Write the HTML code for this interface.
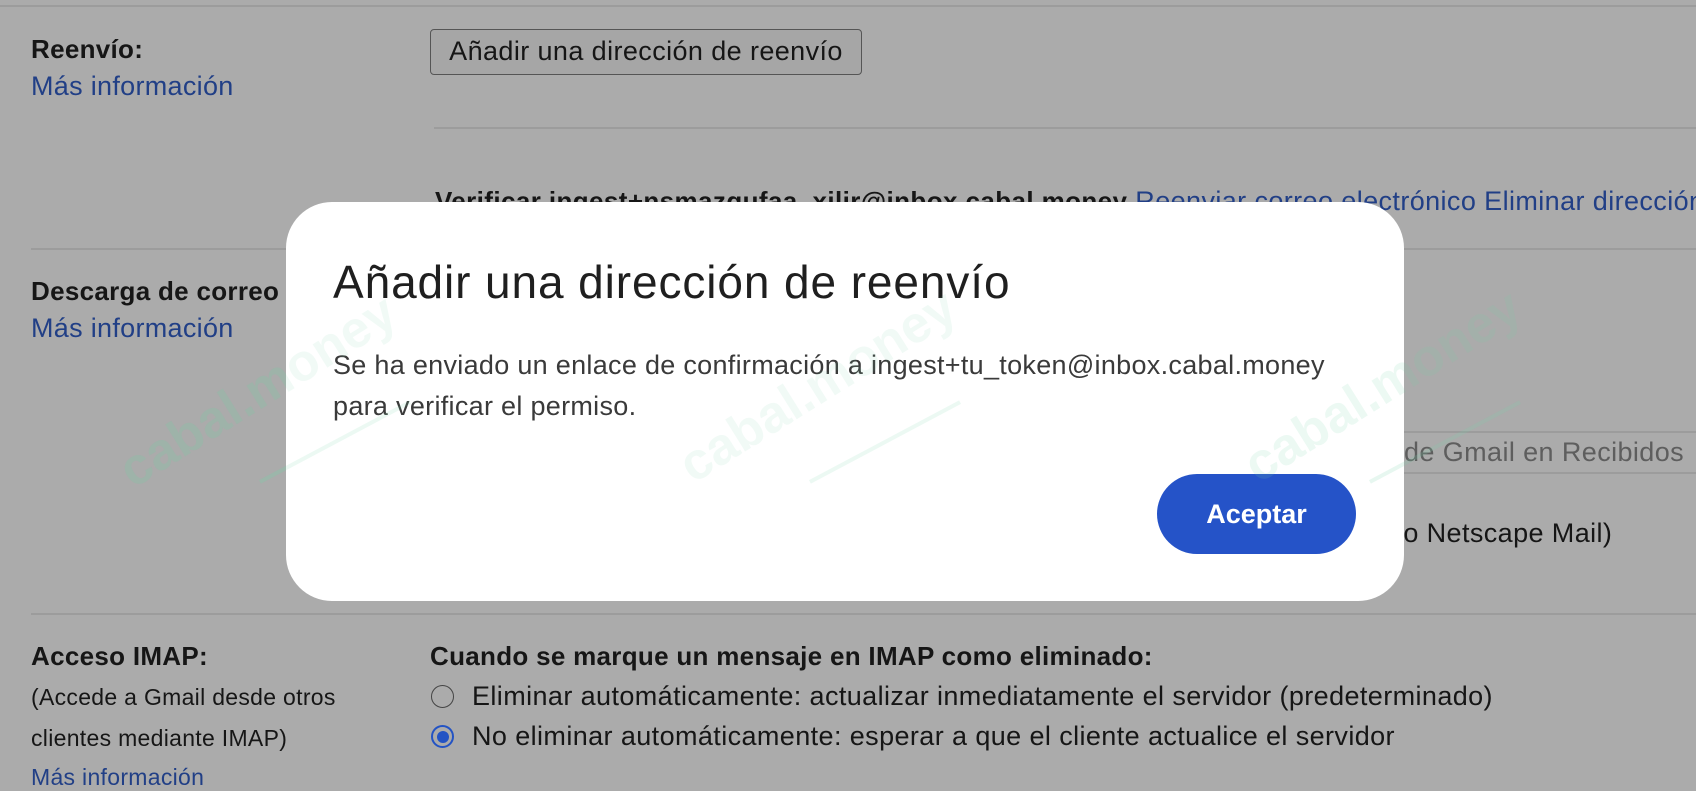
<!DOCTYPE html>
<html><head><meta charset="utf-8"><style>
*{margin:0;padding:0;box-sizing:border-box}
body{width:1696px;height:766px;overflow:hidden;background:#ababab;font-family:"Liberation Sans",sans-serif;color:#161616;position:relative}
.a{position:absolute;white-space:nowrap}
.lbl{font-size:26px;font-weight:bold;letter-spacing:0.3px}
.lnk{color:#213f86;font-size:27px;letter-spacing:0.3px}
.hr{position:absolute;height:2px;background:#9c9c9c}
.t{font-size:27px;letter-spacing:0.4px}
.wm{position:absolute;font-size:52px;font-weight:bold;color:rgba(120,210,170,0.14);transform:rotate(-32deg);transform-origin:left bottom;white-space:nowrap}
.wl{position:absolute;height:4px;width:170px;background:rgba(120,210,170,0.18);transform:rotate(-28deg)}
</style></head><body>
<div class="hr" style="left:0;top:5px;width:1696px"></div>
<div class="a lbl" style="left:31px;top:34px">Reenvío:</div>
<div class="a lnk" style="left:31px;top:71px">Más información</div>
<div class="a t" style="left:430px;top:29px;width:432px;height:46px;border:1.5px solid #555;border-radius:4px;background:#a6a6a6;text-align:center;line-height:43px">Añadir una dirección de reenvío</div>
<div class="hr" style="left:434px;top:127px;width:1262px"></div>
<div class="a t" style="left:435px;top:186px"><b style="font-size:26px">Verificar ingest+nsmazqufaa_xilir@inbox.cabal.money</b> <span style="color:#213f86">Reenviar correo electrónico Eliminar dirección</span></div>
<div class="hr" style="left:31px;top:248px;width:1665px"></div>
<div class="a lbl" style="left:31px;top:276px">Descarga de correo POP:</div>
<div class="a lnk" style="left:31px;top:313px">Más información</div>
<div class="hr" style="left:1300px;top:431px;width:396px"></div>
<div class="hr" style="left:1300px;top:472px;width:396px"></div>
<div class="a t" style="left:1404px;top:437px;color:#5e5e5e">de Gmail en Recibidos</div>
<div class="a t" style="left:1380px;top:518px">a o Netscape Mail)</div>
<div class="hr" style="left:31px;top:613px;width:1665px"></div>
<div class="a lbl" style="left:31px;top:641px">Acceso IMAP:</div>
<div class="a" style="left:31px;top:684px;font-size:23px;letter-spacing:0.3px">(Accede a Gmail desde otros</div>
<div class="a" style="left:31px;top:725px;font-size:23px;letter-spacing:0.3px">clientes mediante IMAP)</div>
<div class="a lnk" style="left:31px;top:764px;font-size:23px">Más información</div>
<div class="a lbl" style="left:430px;top:641px">Cuando se marque un mensaje en IMAP como eliminado:</div>
<div class="a" style="left:431px;top:685px;width:23px;height:23px;border:1.5px solid #444;border-radius:50%"></div>
<div class="a t" style="left:472px;top:681px">Eliminar automáticamente: actualizar inmediatamente el servidor (predeterminado)</div>
<div class="a" style="left:431px;top:725px;width:23px;height:23px;border:2px solid #2353c4;border-radius:50%"><div style="margin:3.5px;width:12px;height:12px;border-radius:50%;background:#2353c4"></div></div>
<div class="a t" style="left:472px;top:721px">No eliminar automáticamente: esperar a que el cliente actualice el servidor</div>

<div class="wm" style="left:140px;top:440px">cabal.money</div>
<div class="wl" style="left:250px;top:440px"></div>
<div class="wm" style="left:700px;top:435px">cabal.money</div>
<div class="wl" style="left:800px;top:440px"></div>
<div class="a" style="left:286px;top:202px;width:1118px;height:399px;background:#fff;border-radius:46px"></div>
<div class="a" style="left:333px;top:255px;font-size:46px;letter-spacing:0.9px;color:#1f1f1f">Añadir una dirección de reenvío</div>
<div class="a" style="left:333px;top:345px;font-size:27px;letter-spacing:0.3px;color:#3a3a3a;line-height:41px">Se ha enviado un enlace de confirmación a ingest+tu_token@inbox.cabal.money<br>para verificar el permiso.</div>
<div class="a" style="left:1157px;top:474px;width:199px;height:80px;border-radius:40px;background:#2553c8;color:#fff;font-size:27px;font-weight:bold;text-align:center;line-height:80px">Aceptar</div>
<div class="wm" style="left:140px;top:440px;color:rgba(120,210,170,0.1)">cabal.money</div>
<div class="wl" style="left:250px;top:440px;background:rgba(120,210,170,0.14)"></div>
<div class="wm" style="left:700px;top:435px;color:rgba(120,210,170,0.1)">cabal.money</div>
<div class="wl" style="left:800px;top:440px;background:rgba(120,210,170,0.14)"></div>
<div class="wm" style="left:1265px;top:435px">cabal.money</div>
<div class="wl" style="left:1360px;top:440px"></div>
</body></html>
